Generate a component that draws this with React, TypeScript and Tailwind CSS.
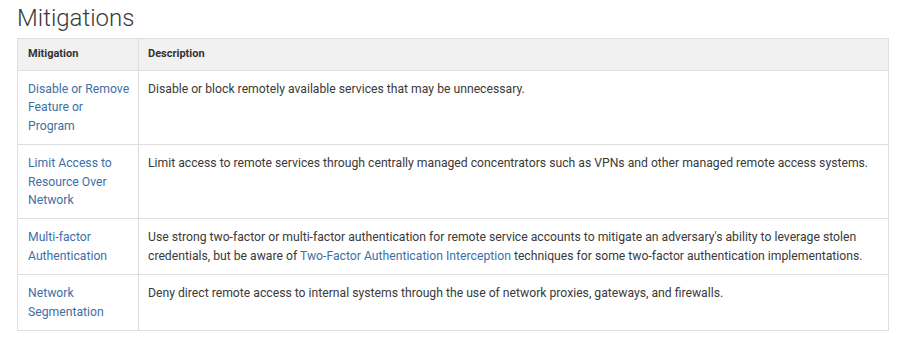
import React from "react";

const rows: { name: string; desc: React.ReactNode }[] = [
  {
    name: "Disable or Remove Feature or Program",
    desc: "Disable or block remotely available services that may be unnecessary.",
  },
  {
    name: "Limit Access to Resource Over Network",
    desc: "Limit access to remote services through centrally managed concentrators such as VPNs and other managed remote access systems.",
  },
  {
    name: "Multi-factor Authentication",
    desc: (
      <>
        Use strong two-factor or multi-factor authentication for remote service accounts to mitigate an adversary's ability to leverage stolen credentials, but be aware of{" "}
        <a className="text-[#3e6fa6]">Two-Factor Authentication Interception</a> techniques for some two-factor authentication implementations.
      </>
    ),
  },
  {
    name: "Network Segmentation",
    desc: "Deny direct remote access to internal systems through the use of network proxies, gateways, and firewalls.",
  },
];

export default function App() {
  return (
    <div className="w-[919px] h-[360px] bg-white px-[17px] pt-[2px]" style={{ fontFamily: "Roboto, 'Liberation Sans', sans-serif" }}>
      <h2 className="text-[24px] leading-[32px] text-[#3a3a3a] font-light mb-[4px]">Mitigations</h2>
      <table className="w-[872px] table-fixed border-collapse border border-[#dedede] text-[12.2px] leading-[18.4px] text-[#3a3a3a]">
        <colgroup>
          <col className="w-[121px]" />
          <col />
        </colgroup>
        <thead>
          <tr className="bg-[#f1f1f1] h-[32px]">
            <th className="text-left font-bold text-[11px] pl-[10px] pr-[6px] border border-[#dedede] text-[#333]">Mitigation</th>
            <th className="text-left font-bold text-[11px] px-[9px] border border-[#dedede] text-[#333]">Description</th>
          </tr>
        </thead>
        <tbody>
          {rows.map((r) => (
            <tr key={r.name}>
              <td className="align-top pl-[10px] pr-[6px] pt-[9px] pb-[9px] border border-[#dedede] text-[#3e6fa6]">{r.name}</td>
              <td className="align-top px-[9px] pt-[9px] pb-[9px] border border-[#dedede]">{r.desc}</td>
            </tr>
          ))}
        </tbody>
      </table>
    </div>
  );
}
